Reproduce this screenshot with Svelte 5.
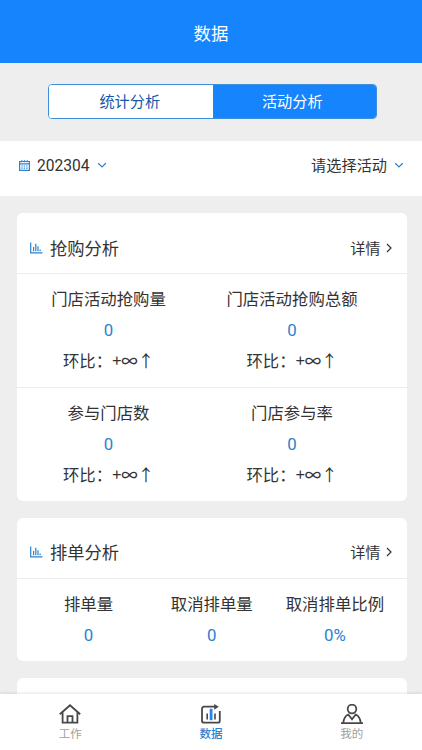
<script lang="ts">
  interface Metric {
    label: string;
    value: string;
    trend?: boolean;
  }

  interface Card {
    title: string;
    rows: Metric[][];
  }

  const tabs = ["统计分析", "活动分析"];
  let activeTab = $state(1);

  const cards: Card[] = [
    {
      title: "抢购分析",
      rows: [
        [
          { label: "门店活动抢购量", value: "0", trend: true },
          { label: "门店活动抢购总额", value: "0", trend: true },
        ],
        [
          { label: "参与门店数", value: "0", trend: true },
          { label: "门店参与率", value: "0", trend: true },
        ],
      ],
    },
    {
      title: "排单分析",
      rows: [
        [
          { label: "排单量", value: "0" },
          { label: "取消排单量", value: "0" },
          { label: "取消排单比例", value: "0%" },
        ],
      ],
    },
  ];
</script>

{#snippet chevron()}
  <svg class="chevron" width="10" height="7" viewBox="0 0 10 7">
    <path d="M1.2 1.3 5 5l3.8-3.7" />
  </svg>
{/snippet}

<div class="page">
  <header>数据</header>

  <div class="tabs">
    {#each tabs as tab, i}
      <button class:active={activeTab === i} onclick={() => (activeTab = i)}>{tab}</button>
    {/each}
  </div>

  <div class="filters">
    <div class="filter">
      <svg class="calendar" width="11" height="11" viewBox="0 0 11 11">
        <path d="M.6 1.5h9.8v8.9H.6zM.6 3.9h9.8M2.8.2v2M5.5.2v2M8.2.2v2" />
        <path class="dots" d="M2.3 6h6.8M2.3 8.1h6.8" />
      </svg>
      <span class="month">202304</span>
      {@render chevron()}
    </div>
    <div class="filter">
      <span class="activity">请选择活动</span>
      {@render chevron()}
    </div>
  </div>

  <main>
    {#each cards as card}
      <section class="card">
        <div class="card-head">
          <svg class="bars" width="13" height="12" viewBox="0 0 13 12">
            <path d="M.7.6v10.3h11.8M3.6 9.3V5M5.8 9.3V1.8M8 9.3V4.2M10.1 9.3V7.4" />
          </svg>
          <h2>{card.title}</h2>
          <span class="more">详情</span>
          <svg class="arrow" width="6" height="10" viewBox="0 0 6 10">
            <path d="M1 1l4 4-4 4" />
          </svg>
        </div>
        {#each card.rows as row}
          <div class="row" class:three={row.length === 3}>
            {#each row as metric}
              <div class="metric">
                <div class="label">{metric.label}</div>
                <div class="value">{metric.value}</div>
                {#if metric.trend}
                  <div class="trend">环比：+<span class="inf">∞</span>↑</div>
                {/if}
              </div>
            {/each}
          </div>
        {/each}
      </section>
    {/each}
    <section class="card next"></section>
  </main>

  <nav>
    <div class="item">
      <svg width="22" height="20" viewBox="0 0 22 20">
        <path d="M.8 10.2 11 1.3l10.200 8.900M3.600 8.500v10.200h14.800V8.500M8.500 18.500v-6.300h5v6.300" />
      </svg>
      <span>工作</span>
    </div>
    <div class="item current">
      <svg width="22" height="20" viewBox="0 0 22 20">
        <path d="M15 2.700H4a2 2 0 0 0-2 2v12a2 2 0 0 0 2 2h13.800a2 2 0 0 0 2-2V7" />
        <path class="tip" d="M14.200 0l4.600 2.800-4.600 2.900z" />
        <path class="thin" d="M7.200 9.500v6M15 9.500v6" />
        <path class="accent" d="M11.100 4.800v11.400" />
      </svg>
      <span>数据</span>
    </div>
    <div class="item">
      <svg width="22" height="20" viewBox="0 0 22 20">
        <circle cx="11" cy="5" r="4.300" />
        <path d="M0 19.100h22M2.300 18.800c.5-4.500 2-7.100 5-8.300l3.700 4.700 3.700-4.700c3 1.200 4.500 3.800 5 8.300" />
      </svg>
      <span>我的</span>
    </div>
  </nav>
</div>

<style>
  :global(body) {
    background: #eeeeee;
  }

  .page {
    display: flex;
    flex-direction: column;
    height: 750px;
    overflow: hidden;
    background: #eeeeee;
    color: #333;
    font-family: "Noto Sans CJK SC", sans-serif;
    font-size: 15.2px;
  }

  header {
    flex: none;
    box-sizing: border-box;
    height: 63px;
    padding-top: 3px;
    background: #1684fc;
    color: #fff;
    font-size: 17.4px;
    line-height: 59px;
    text-align: center;
  }

  .tabs {
    flex: none;
    display: flex;
    box-sizing: border-box;
    width: 329px;
    height: 35px;
    margin: 21px 0 0 48px;
    border: 1px solid #3d8fdc;
    border-radius: 4px;
    overflow: hidden;
    background: #fff;

    button {
      box-sizing: border-box;
      width: 50%;
      padding: 0 2px 2px 0;
      border: 0;
      background: #fff;
      color: #1558ad;
      font: inherit;
      line-height: 31px;
    }

    .active {
      padding-right: 4px;
      background: #1684fc;
      color: #fff;
    }
  }

  .filters {
    flex: none;
    display: flex;
    justify-content: space-between;
    box-sizing: border-box;
    height: 55px;
    margin-top: 21.5px;
    padding: 0 18px 5px 19px;
    background: #fff;
  }

  .filter {
    display: flex;
    align-items: center;
    gap: 7px;
  }

  .month,
  .value {
    font-family: Roboto, "Noto Sans CJK SC", sans-serif;
  }

  .month {
    font-size: 15.6px;
  }

  .activity {
    padding-bottom: 3px;
  }

  svg {
    flex: none;
    fill: none;
    stroke: #555;
  }

  .chevron,
  .calendar,
  .bars {
    stroke: #2b82cf;
    stroke-width: 1.2;
  }

  .dots {
    stroke-dasharray: 1.4 1;
  }

  main {
    flex: 1;
    display: flex;
    flex-direction: column;
    gap: 16.5px;
    min-height: 0;
    padding: 17.5px 15.5px 0 17px;
  }

  .card {
    flex: none;
    border-radius: 6px;
    background: #fff;
  }

  .card-head {
    display: flex;
    align-items: center;
    box-sizing: border-box;
    height: 60px;
    padding: 9px 15px 0 13px;
  }

  h2 {
    flex: 1;
    margin: 0 0 0 7px;
    font-size: 17.3px;
    font-weight: 400;
    line-height: 24px;
  }

  .more {
    padding-bottom: 2px;
  }

  .arrow {
    margin-left: 5px;
    stroke: #333;
    stroke-width: 1.2;
  }

  .row {
    display: grid;
    grid-template-columns: 183px 184px;
    box-sizing: border-box;
    height: 114px;
    padding-top: 9px;
    border-top: 1px solid #ededed;
    font-size: 16.4px;
    line-height: 31px;
    text-align: center;
  }

  .three {
    grid-template-columns: repeat(3, 1fr);
    height: 83.5px;
    padding: 9px 10px 0;
  }

  .value {
    height: 31px;
    color: #2b82cf;
    font-size: 16.8px;
    line-height: 33px;
  }

  .inf {
    font-weight: 500;
  }

  .next {
    height: 60px;
  }

  nav {
    z-index: 1;
    flex: none;
    display: grid;
    grid-template-columns: repeat(3, 1fr);
    height: 56px;
    background: #fff;
    box-shadow: 0 -1px 3px rgba(0, 0, 0, 0.1);

    svg {
      stroke: #484848;
      stroke-width: 1.8;
    }
  }

  .item {
    display: flex;
    flex-direction: column;
    align-items: center;
    padding-top: 10px;
    color: #a0a0a0;
    font-size: 11.5px;
    line-height: 19px;
  }

  .current {
    color: #2b82cf;
    font-weight: 500;
  }

  nav .tip {
    fill: #484848;
    stroke: none;
  }

  nav .thin {
    stroke-width: 1.6;
  }

  nav .accent {
    stroke: #2684f0;
    stroke-width: 2.8;
  }
</style>
